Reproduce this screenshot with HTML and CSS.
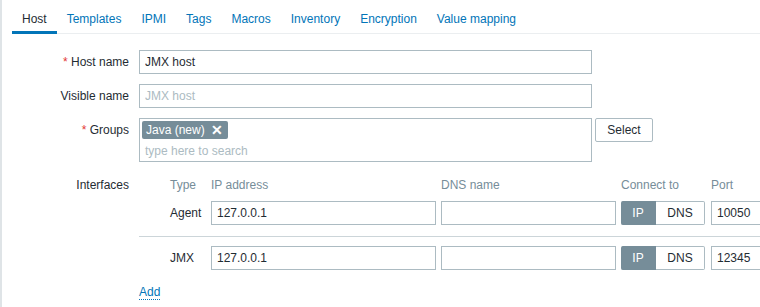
FILE: index.html
```html
<!doctype html>
<html>
  <head>
    <title>Host</title>
    <meta http-equiv="Content-Type" content="text/html; charset=utf-8" />
    <link rel="stylesheet" href="styles.css">
  </head>
  <body>
    <div class="page">
      <ul class="tabs">
        <li class="tab active">Host</li>
        <li class="tab">Templates</li>
        <li class="tab">IPMI</li>
        <li class="tab">Tags</li>
        <li class="tab">Macros</li>
        <li class="tab">Inventory</li>
        <li class="tab">Encryption</li>
        <li class="tab">Value mapping</li>
      </ul>

      <div class="form">
        <div class="row">
          <label class="label"><span class="req">*</span> Host name</label>
          <div class="field"><input class="text wide" type="text" value="JMX host"></div>
        </div>
        <div class="row">
          <label class="label">Visible name</label>
          <div class="field"><input class="text wide" type="text" placeholder="JMX host"></div>
        </div>
        <div class="row">
          <label class="label"><span class="req">*</span> Groups</label>
          <div class="field groups">
            <div class="multiselect">
              <span class="chip">Java (new) <span class="chip-x">&#x2715;</span></span>
              <div class="search">type here to search</div>
            </div>
            <button class="btn">Select</button>
          </div>
        </div>
        <div class="row">
          <label class="label iface-label">Interfaces</label>
          <div class="field ifaces">
            <div class="iface head">
              <span></span>
              <span>Type</span>
              <span>IP address</span>
              <span>DNS name</span>
              <span>Connect to</span>
              <span class="port">Port</span>
            </div>
            <div class="iface first">
              <span></span>
              <span>Agent</span>
              <input class="text" type="text" value="127.0.0.1">
              <input class="text" type="text" value="">
              <div class="toggle"><span class="on">IP</span><span>DNS</span></div>
              <input class="text port" type="text" value="10050">
            </div>
            <div class="iface">
              <span></span>
              <span>JMX</span>
              <input class="text" type="text" value="127.0.0.1">
              <input class="text" type="text" value="">
              <div class="toggle"><span class="on">IP</span><span>DNS</span></div>
              <input class="text port" type="text" value="12345">
            </div>
            <a class="add" href="#">Add</a>
          </div>
        </div>
      </div>
    </div>
  </body>
</html>
```

FILE: styles.css
```css
* {
  margin: 0px;
  padding: 0px;
  box-sizing: border-box;
}
body {
  background-color: #ffffff;
  font-family: "Liberation Sans", Arial, sans-serif;
  font-size: 12px;
  color: #1f2c33;
  overflow: hidden;
}
.page {
  border-left: 2px solid #dfe4e7;
  height: 307px;
  padding-left: 10px;
}
.tabs {
  display: flex;
  list-style: none;
  border-bottom: 1px solid #ebeef0;
  padding-top: 10px;
}
.tab {
  padding: 0 10px;
  height: 24px;
  line-height: 19px;
  color: #0275b8;
  margin-bottom: -1px;
  border-bottom: 3px solid transparent;
}
.tab.active {
  color: #1f2c33;
  border-bottom-color: #0275b8;
}
.form {
  padding-top: 16px;
}
.row {
  display: grid;
  grid-template-columns: 117px 1fr;
  column-gap: 10px;
  margin-bottom: 10px;
}
.label {
  text-align: right;
  line-height: 24px;
}
.req {
  color: #e33734;
}
.text {
  height: 24px;
  border: 1px solid #acbbc2;
  border-radius: 0;
  padding: 0 5px;
  font-family: inherit;
  font-size: 12px;
  color: #1f2c33;
  background: #ffffff;
  outline: none;
}
.text::placeholder {
  color: #acbbc2;
}
.wide {
  width: 453px;
}
.groups {
  display: flex;
  gap: 3px;
  align-items: flex-start;
}
.multiselect {
  width: 453px;
  height: 44px;
  border: 1px solid #acbbc2;
  padding: 2px 2px 0;
}
.chip {
  display: inline-block;
  background: #768d99;
  color: #ffffff;
  height: 18px;
  line-height: 18px;
  padding: 0 5px 0 4px;
  border-radius: 2px;
}
.chip-x {
  font-weight: bold;
  margin-left: 3px;
  font-size: 14px;
  vertical-align: top;
}
.search {
  color: #acbbc2;
  padding: 5px 3px 0;
  line-height: 15px;
}
.btn {
  height: 24px;
  width: 58px;
  border: 1px solid #acbbc2;
  border-radius: 2px;
  background: #ffffff;
  color: #1f2c33;
  font-family: inherit;
  font-size: 12px;
}
.iface-label {
  line-height: 26px;
}
.iface {
  display: grid;
  grid-template-columns: 26px 36px 225px 175px 85px 60px;
  column-gap: 5px;
  align-items: center;
}
.iface.head {
  height: 26px;
  color: #768d99;
}
.iface.first {
  margin-top: 3px;
  padding-bottom: 11px;
  border-bottom: 1px solid #ccd5d9;
  margin-bottom: 9px;
}
.toggle {
  display: flex;
  width: 84px;
  height: 24px;
}
.toggle span {
  flex: 1;
  text-align: center;
  line-height: 22px;
  border: 1px solid #acbbc2;
  border-left: none;
  border-radius: 0 2px 2px 0;
}
.toggle span.on {
  flex: 0 0 35px;
  background: #768d99;
  border-color: #768d99;
  color: #ffffff;
  border-radius: 2px 0 0 2px;
}
.add {
  display: inline-block;
  margin-top: 16px;
  color: #0275b8;
  text-decoration: none;
  border-bottom: 1px dotted #0275b8;
  line-height: 13px;
}
```
